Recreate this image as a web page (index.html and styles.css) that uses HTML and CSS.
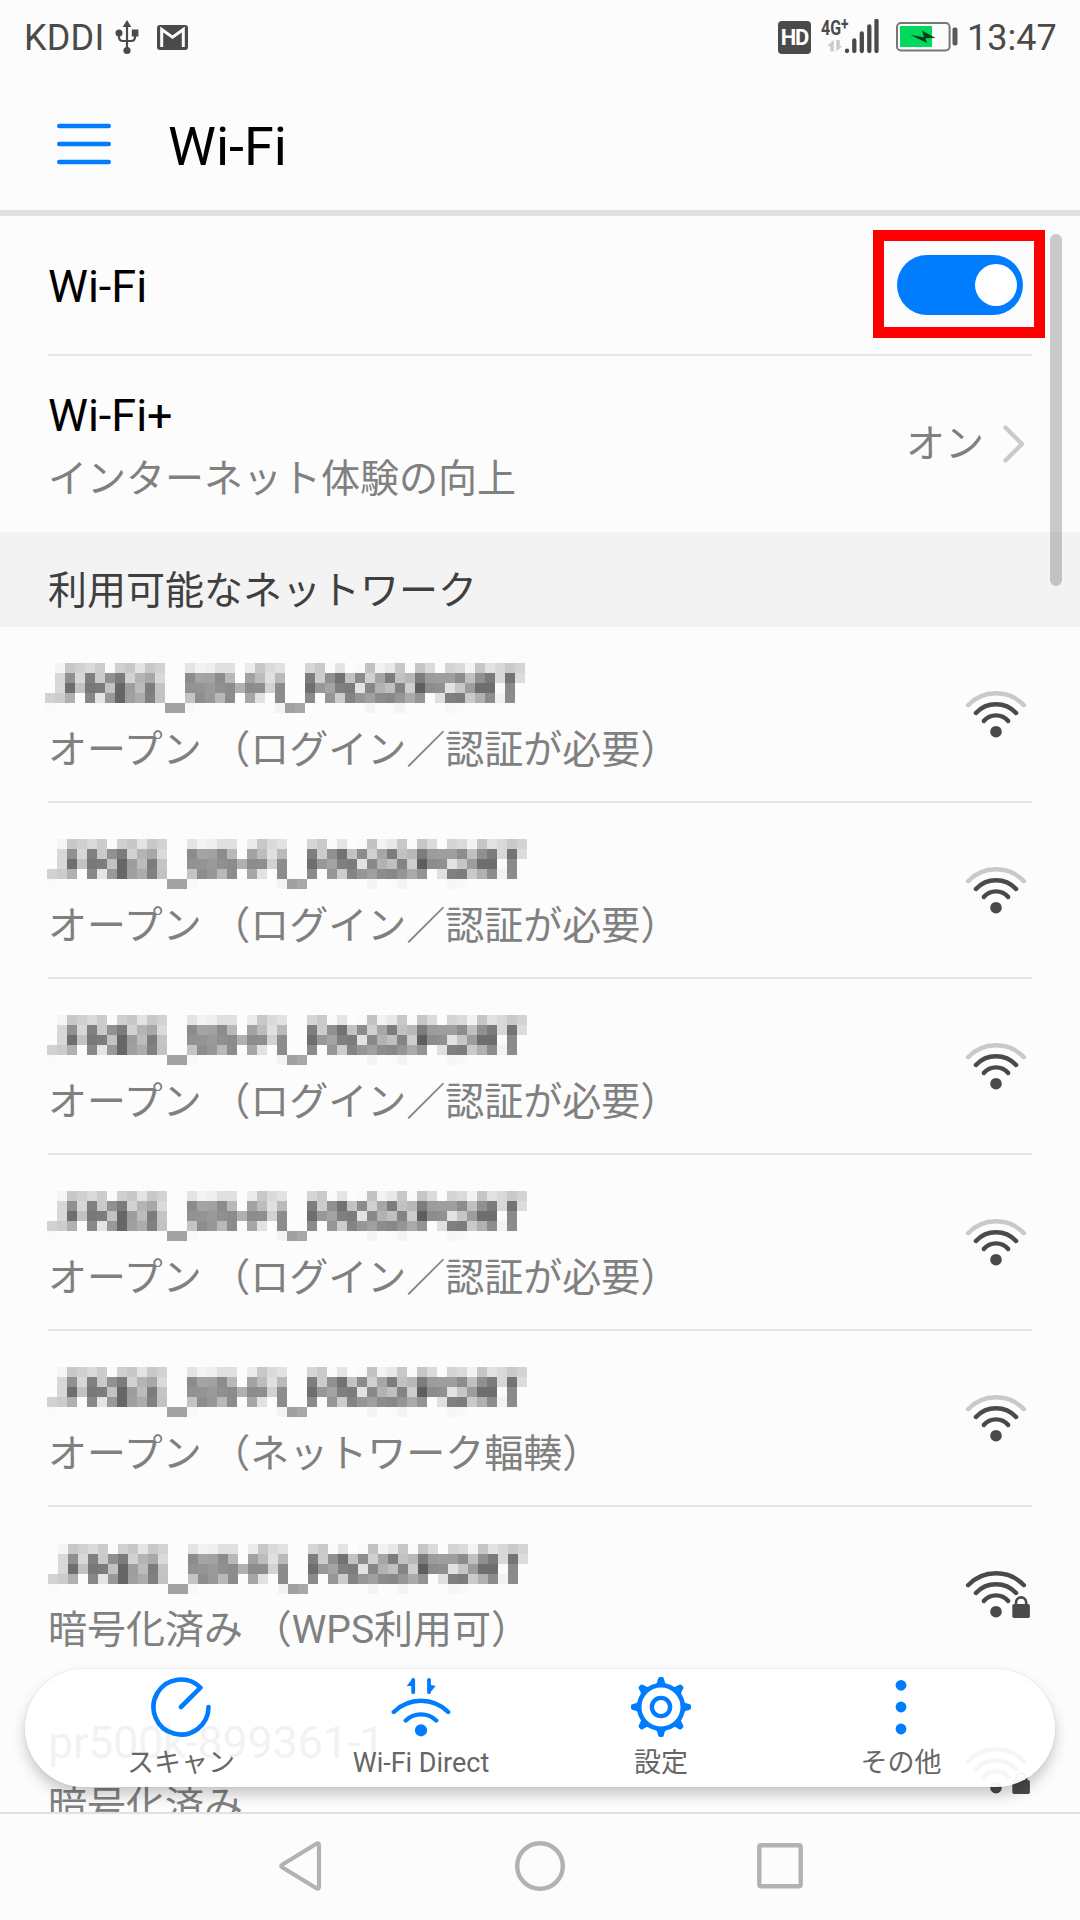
FILE: index.html
```html
<!DOCTYPE html>
<html lang="ja">
<head>
<meta charset="utf-8">
<title>Wi-Fi</title>
<link rel="stylesheet" href="styles.css">
</head>
<body>
<svg class="defs" aria-hidden="true">
  <symbol id="wifi-open" viewBox="0 0 66 60">
    <g fill="none" stroke="#4a4a4a" stroke-width="4.4" stroke-linecap="round">
      <path stroke="#c9c9c9" d="M4.1 19.2A38.7 38.7 0 0 1 59.9 19.2"/>
      <path d="M11.9 27A27.4 27.4 0 0 1 52.1 27"/>
      <path d="M19.8 35A16 16 0 0 1 44.2 35"/>
    </g>
    <circle cx="32" cy="45.7" r="5.8" fill="#4a4a4a"/>
  </symbol>
  <symbol id="wifi-lock" viewBox="0 0 66 60">
    <g fill="none" stroke="#4a4a4a" stroke-width="4.4" stroke-linecap="round">
      <path d="M4.1 19.2A38.7 38.7 0 0 1 59.9 19.2"/>
      <path d="M11.9 27A27.4 27.4 0 0 1 52.1 27"/>
      <path d="M19.8 35A16 16 0 0 1 44.2 35"/>
    </g>
    <circle cx="32" cy="45.7" r="5.8" fill="#4a4a4a"/>
    <rect x="48.3" y="38" width="17.6" height="14" rx="1.8" fill="#4a4a4a"/>
    <path d="M52 39.5V36.5A5.1 5.1 0 0 1 62.2 36.5V39.5" fill="none" stroke="#4a4a4a" stroke-width="2.6"/>
  </symbol>
</svg>

<header class="status">
  <span class="carrier">KDDI</span>
  <svg class="usb" viewBox="0 0 24 36" width="24" height="36">
    <path d="M12 7V30M4 13V18Q4 22 8 22H16Q20 22 20 18V13" fill="none" stroke="#4a4a4a" stroke-width="2.2"/>
    <path d="M12 1L16.3 8H7.7Z" fill="#4a4a4a"/><circle cx="4" cy="14" r="3.5" fill="#4a4a4a"/>
    <rect x="16.8" y="10.5" width="6.6" height="7" fill="#4a4a4a"/><circle cx="12" cy="31.5" r="3.6" fill="#4a4a4a"/>
  </svg>
  <svg class="mail" viewBox="0 0 31 25" width="31" height="25">
    <rect width="31" height="25" rx="3" fill="#4a4a4a"/>
    <path d="M4.7 22V4.5L15.5 12.2L26.3 4.5V22" fill="none" stroke="#fcfcfc" stroke-width="3"/>
  </svg>
  <span class="hd">HD</span>
  <span class="signal">
    <span class="net">4G<sup>+</sup></span>
    <svg viewBox="0 0 58 36" width="58" height="36">
      <path d="M26 31.7v.3M33.3 21.5v10.5M40.8 14.5v17.5M48.3 7.5v24.500M55.500 1.800v30.200" stroke="#4a4a4a" stroke-width="4.3" stroke-linecap="round"/>
      <path d="M12.800 21V32.500H9.300V27H6ZM15.300 21V32.500L21.500 27H18.800V21Z" fill="#cbcbcb"/>
    </svg>
  </span>
  <svg class="battery" viewBox="0 0 62 30" width="62" height="30">
    <rect x="1" y="1" width="52.6" height="27.4" rx="4" fill="none" stroke="#777" stroke-width="2"/>
    <rect x="4" y="4" width="32" height="21" fill="#00d95c"/>
    <path d="M14.5 13L28 15.3L26 8.5L39.5 16L29.5 16.3L31 21Z" fill="#0d3d20"/>
    <rect x="56.5" y="5.5" width="5" height="18" rx="2" fill="#5a5a5a"/>
  </svg>
  <span class="clock">13:47</span>
</header>

<div class="appbar">
  <svg viewBox="0 0 54 42" width="54" height="42"><path d="M2.3 3H51.7M2.3 21H51.7M2.3 39H51.7" stroke="#007dff" stroke-width="4.6" stroke-linecap="round"/></svg>
  <h1>Wi-Fi</h1>
</div>

<main class="list">
  <section class="row toggle-row">
    <div class="title">Wi-Fi</div>
    <div class="switch"><span class="knob"></span></div>
    <div class="highlight"></div>
  </section>
  <section class="row last">
    <div class="text"><div class="title">Wi-Fi+</div><div class="sub">インターネット体験の向上</div></div>
    <div class="value">オン</div>
    <svg class="chevron" viewBox="0 0 22 40" width="22" height="40"><path d="M2.5 3.5L19 20L2.5 36.5" fill="none" stroke="#cacaca" stroke-width="4.4" stroke-linecap="round" stroke-linejoin="round"/></svg>
  </section>
  <h2>利用可能なネットワーク</h2>
  <section class="row">
    <div class="text"><svg class="mosaic shift-a"></svg><div class="sub">オープン （ログイン／認証が必要）</div></div>
    <svg class="wifi"><use href="#wifi-open"/></svg>
  </section>
  <section class="row">
    <div class="text"><svg class="mosaic shift-b"></svg><div class="sub">オープン （ログイン／認証が必要）</div></div>
    <svg class="wifi"><use href="#wifi-open"/></svg>
  </section>
  <section class="row">
    <div class="text"><svg class="mosaic shift-b"></svg><div class="sub">オープン （ログイン／認証が必要）</div></div>
    <svg class="wifi"><use href="#wifi-open"/></svg>
  </section>
  <section class="row">
    <div class="text"><svg class="mosaic shift-b"></svg><div class="sub">オープン （ログイン／認証が必要）</div></div>
    <svg class="wifi"><use href="#wifi-open"/></svg>
  </section>
  <section class="row">
    <div class="text"><svg class="mosaic shift-b"></svg><div class="sub">オープン （ネットワーク輻輳）</div></div>
    <svg class="wifi"><use href="#wifi-open"/></svg>
  </section>
  <section class="row">
    <div class="text"><svg class="mosaic shift-c"></svg><div class="sub">暗号化済み （WPS利用可）</div></div>
    <svg class="wifi"><use href="#wifi-lock"/></svg>
  </section>
  <section class="row">
    <div class="text"><div class="title ssid">pr500k-899361-1</div><div class="sub">暗号化済み</div></div>
    <svg class="wifi"><use href="#wifi-lock"/></svg>
  </section>
  <div class="scrollbar"></div>
  <nav class="actions">
    <div class="action">
      <svg viewBox="0 0 60 60"><path d="M57.5 30A27.5 27.5 0 1 1 49.45 10.55L30 30" fill="none" stroke="#007dff" stroke-width="4.6" stroke-linecap="round" stroke-linejoin="round"/></svg>
      <span>スキャン</span>
    </div>
    <div class="action">
      <svg viewBox="0 0 60 60">
        <path d="M2.8 35A38.6 38.6 0 0 1 57.2 35M14.8 43.5A22 22 0 0 1 45.2 43.5" fill="none" stroke="#007dff" stroke-width="4.4" stroke-linecap="round"/>
        <circle cx="30" cy="53.3" r="6.1" fill="#007dff"/>
        <path d="M22.2 2.8V15.2M38 2.8V15.2" stroke="#007dff" stroke-width="3.8" stroke-linecap="round"/>
        <path d="M22 1L15.7 9H22ZM38 17L44.7 9L38 7.5Z" fill="#007dff"/>
      </svg>
      <span>Wi-Fi Direct</span>
    </div>
    <div class="action">
      <svg viewBox="0 0 60 60">
        <g fill="none" stroke="#007dff"><circle cx="30" cy="30" r="21.8" stroke-width="4.6"/><circle cx="30" cy="30" r="9.1" stroke-width="4.4"/></g>
        <g fill="#007dff">
          <path id="teeth" d="M24 8Q26.5 6 27 2Q27.2 0 29 0H31Q32.8 0 33 2Q33.5 6 36 8ZM24 52Q26.5 54 27 58Q27.2 60 29 60H31Q32.8 60 33 58Q33.5 54 36 52Z"/>
          <use href="#teeth" transform="rotate(45 30 30)"/><use href="#teeth" transform="rotate(90 30 30)"/><use href="#teeth" transform="rotate(135 30 30)"/>
        </g>
      </svg>
      <span>設定</span>
    </div>
    <div class="action">
      <svg viewBox="0 0 60 60" fill="#007dff"><circle cx="30" cy="8.3" r="5.4"/><circle cx="30" cy="30" r="5.4"/><circle cx="30" cy="52" r="5.4"/></svg>
      <span>その他</span>
    </div>
  </nav>
</main>

<footer class="navbar">
  <svg viewBox="0 0 50 50"><path d="M44 4.5V45.5Q44 49 41 47L7.5 26.5Q5 25 7.5 23.5L41 3Q44 1 44 4.5Z" fill="none" stroke="#b2b2b2" stroke-width="4.2"/></svg>
  <svg viewBox="0 0 50 50"><circle cx="25" cy="25" r="22.8" fill="none" stroke="#b2b2b2" stroke-width="4.4"/></svg>
  <svg viewBox="0 0 50 50"><rect x="4.3" y="4.3" width="41.4" height="41" rx="1.8" fill="none" stroke="#b2b2b2" stroke-width="4.4"/></svg>
</footer>
<script src="mosaic.js"></script>
</body>
</html>
```
FILE: styles.css
```css
* { box-sizing: border-box; margin: 0; padding: 0; }
body {
  width: 1080px; height: 1920px; overflow: hidden;
  display: flex; flex-direction: column;
  background: #fcfcfc; color: #000;
  font-family: Roboto, "Noto Sans CJK JP", sans-serif;
}
svg { display: block; flex: none; }
.defs { position: absolute; width: 0; height: 0; }

.status { flex: none; height: 74px; padding: 0 23px 0 24px; display: flex; align-items: center; color: #4a4a4a; font-size: 36px; line-height: 42px; }
.carrier, .clock { padding-top: 1px; }
.carrier { letter-spacing: .2px; }
.usb { margin-left: 11px; }
.mail { margin-left: 18px; }
.hd {
  margin-left: auto; width: 33px; height: 33px; border-radius: 4px;
  background: #4a4a4a; color: #fff; text-align: center;
  font-size: 22px; font-weight: 700; line-height: 34px; letter-spacing: -1.2px;
}
.signal { position: relative; margin-left: 10px; }
.net { position: absolute; left: 0; top: -1px; font-size: 21px; font-weight: 700; line-height: 20px; transform: scaleX(.76); transform-origin: left; white-space: nowrap; }
.net sup { font-size: 18px; line-height: 0; vertical-align: 5px; }
.battery { margin-left: 17px; }
.clock { width: 90px; margin-left: 9px; }

.appbar { flex: none; height: 142px; padding: 4px 57px 0; display: flex; align-items: center; gap: 57px; border-bottom: 6px solid #e1e1e1; }
h1 { font-size: 54px; font-weight: 400; line-height: 64px; padding-top: 5px; }

.list { position: relative; flex: none; height: 1596px; overflow: hidden; }
.row { position: relative; height: 176px; margin: 0 48px; display: flex; align-items: center; border-bottom: 2px solid #e6e6e6; }
.toggle-row { height: 140px; }
.row.last { border-bottom: 0; }
.text { flex: 1; align-self: flex-start; padding-top: 32px; }
.title { flex: 1; font-size: 45px; line-height: 54px; white-space: nowrap; }
.text .title { padding-top: 1px; }
.ssid { letter-spacing: -.3px; }
.toggle-row .title { padding-top: 3px; }
.sub { margin-top: 7px; font-size: 39px; line-height: 58px; color: #808080; white-space: nowrap; }
.value { font-size: 39px; line-height: 58px; color: #808080; margin-right: 19px; }
.chevron { margin-right: 7px; }
.switch { width: 126px; height: 60px; margin-right: 9px; border-radius: 30px; background: #007dff; display: flex; align-items: center; justify-content: flex-end; padding-right: 6px; }
.knob { width: 42px; height: 42px; border-radius: 50%; background: #fff; }
.highlight { position: absolute; right: -13px; top: 14px; width: 172px; height: 108px; border: 11px solid #f00; }
h2 { height: 95px; padding: 30px 48px 0; background: #f3f3f3; color: #3f3f3f; font-size: 39px; line-height: 58px; font-weight: 400; }
.wifi { width: 66px; height: 60px; margin-right: 2px; align-self: flex-start; margin-top: 59px; }
.mosaic { width: 480px; height: 50px; margin-top: 4px; margin-bottom: 8px; }
.shift-a { margin-left: -3px; }
.shift-b { margin-left: -1px; }
.shift-c { margin-top: 5px; margin-bottom: 7px; }
.scrollbar { position: absolute; left: 1050px; top: 18px; width: 12px; height: 352px; border-radius: 6px; background: rgba(0,0,0,.2); }

.actions {
  position: absolute; left: 25px; right: 25px; top: 1453px; height: 118px;
  padding: 8px 34px 0 36px; display: flex; border-radius: 60px;
  background: rgba(255,255,255,.95);
  box-shadow: 0 8px 14px rgba(0,0,0,.2), 0 0 2px rgba(0,0,0,.14);
}
.action { width: 240px; display: flex; flex-direction: column; align-items: center; }
.action svg { width: 60px; height: 60px; }
.action span { margin-top: 6px; font-size: 27px; line-height: 40px; color: #666; white-space: nowrap; }

.navbar { flex: 1; border-top: 2px solid #e1e1e1; display: flex; justify-content: center; align-items: center; gap: 190px; padding-bottom: 2px; }
.navbar svg { width: 50px; height: 50px; }
```
FILE: mosaic.js
```js
// Network names are masked by 10px grey tiles; each pair is one tile's grey level.
const tiles = [
  '-- f5 c8 d0 da cc fa d0 c8 e4 c8 d2 -- -- e4 f2 ee e0 e0 -- eb c8 da e2 -- -- d6 ca fa e4 fc f9 c2 f2 e8 c8 fa c6 da fc d4 da f3 c6 e2 d8 ca d4',
  '-- d8 90 d8 80 ca 90 7c d2 b4 a8 da -- -- 8c a4 a2 8c b8 -- a2 bc e0 ba -- -- 7e cc 90 72 c2 8c d0 a6 7c c2 b8 7c 9c 9e 9e 8c c0 90 7a d8 74 dc',
  '-- d8 6e c2 78 7c c2 66 9e bc 7c c4 -- -- 92 94 9a 90 8c b0 8c 8e d2 8c -- -- 6e 98 a4 80 7c e2 88 b2 c0 84 ce 5e 8c 90 e2 c6 9c 6e 6e fa 8a --',
  'd2 cc b0 -- 88 e4 98 66 a0 ac 80 c2 -- -- c4 8e 98 b8 8c -- a6 e2 -- 8c -- -- 8a -- 96 cc 84 96 a0 8c 88 96 aa 94 -- e0 80 7c ca b0 8c f2 8c --',
  'fa -- -- -- -- -- -- -- -- -- -- -- a2 a2 f8 -- -- -- -- -- -- -- -- f3 a0 a8 -- -- -- -- -- -- f4 -- fb f4 -- -- -- -- f7 f9 -- -- -- -- -- --'
];
const rects = tiles.map((row, y) => row.split(' ').map((g, x) =>
  g === '--' ? '' : `<rect x="${x * 10}" y="${y * 10}" width="10" height="10" fill="#${g}${g}${g}" shape-rendering="crispEdges"/>`
).join('')).join('');
document.querySelectorAll('.mosaic').forEach(el => { el.innerHTML = rects; });
```
